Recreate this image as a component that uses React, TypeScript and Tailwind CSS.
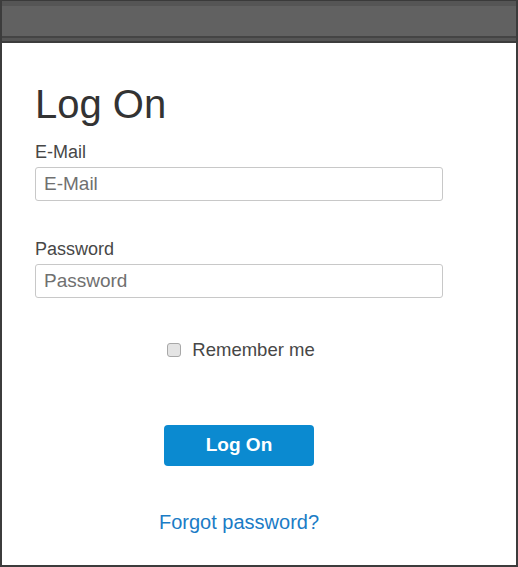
import React, { useState } from 'react';

const font = "font-['Liberation_Sans',Arial,sans-serif]";

const LogOnPage = () => {
  const [email, setEmail] = useState('');
  const [password, setPassword] = useState('');
  const [remember, setRemember] = useState(false);

  return (
    <div className={`w-[518px] h-[567px] bg-white ${font}`}>
      <div className="w-full h-full flex flex-col border-x-2 border-b-2 border-[#3c3c3c]">
        {/* top bar */}
        <div className="flex flex-col shrink-0">
          <div className="h-px bg-[#3a3a3a]" />
          <div className="h-[5px] bg-[#555555]" />
          <div className="h-[30px] bg-[#616161]" />
          <div className="h-[2px] bg-[#444444]" />
          <div className="h-[3px] bg-[#555555]" />
          <div className="h-[2px] bg-[#3c3c3c]" />
        </div>

        <div className="pl-[33px] pt-[40px] w-[441px]">
          <h1 className="text-[40px] leading-[43px] text-[#333333] font-normal">Log On</h1>

          <label className="block mt-[16px] text-[18px] leading-[20px] text-[#474747]">E-Mail</label>
          <input
            type="text"
            placeholder="E-Mail"
            value={email}
            onChange={(e) => setEmail(e.target.value)}
            className="mt-[5px] block w-[408px] h-[34px] px-[8px] border border-[#c8c8c8] rounded-[3px] text-[19px] text-[#333333] placeholder:text-[#707070] outline-none"
          />

          <label className="block mt-[38px] text-[18px] leading-[20px] text-[#474747]">Password</label>
          <input
            type="password"
            placeholder="Password"
            value={password}
            onChange={(e) => setPassword(e.target.value)}
            className="mt-[5px] block w-[408px] h-[34px] px-[8px] border border-[#c8c8c8] rounded-[3px] text-[19px] text-[#333333] placeholder:text-[#707070] outline-none"
          />

          <div className="w-[408px] flex flex-col items-center">
            <label className="mt-[42px] flex items-center gap-[11px] text-[18.5px] leading-[20px] text-[#474747] pl-[4px]">
              <input
                type="checkbox"
                checked={remember}
                onChange={(e) => setRemember(e.target.checked)}
                className="appearance-none w-[14px] h-[14px] rounded-[3px] border border-[#a8a8a8] bg-[#e4e4e4] checked:bg-[#0b8ad0]"
              />
              Remember me
            </label>

            <button className="mt-[65px] w-[150px] h-[41px] rounded-[4px] bg-[#0b8ad0] text-white font-bold text-[19px]">
              Log On
            </button>

            <a href="#" className="mt-[46px] text-[20px] leading-[20px] text-[#1a7cc6]">
              Forgot password?
            </a>
          </div>
        </div>
      </div>
    </div>
  );
};

export default function App() {
  return <LogOnPage />;
}
